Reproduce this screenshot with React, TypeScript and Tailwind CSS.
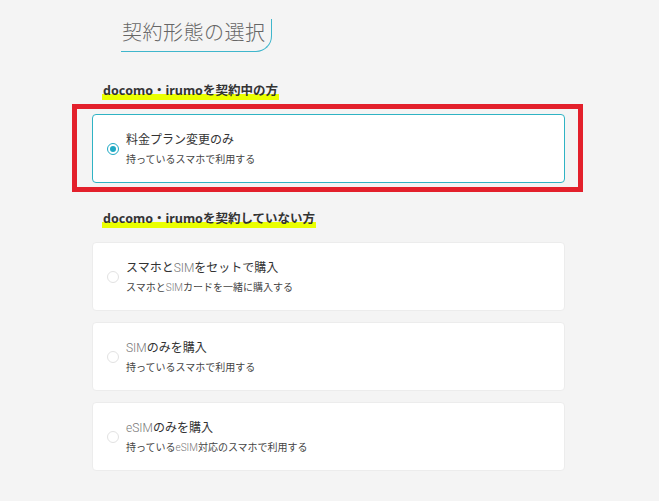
import React from 'react';

const jp = "font-['Noto_Sans','Noto_Sans_CJK_JP',sans-serif]";

type Plan = {
  title: React.ReactNode;
  sub: React.ReactNode;
  selected?: boolean;
};

const Latin = ({ children }: { children: React.ReactNode }) => (
  <span className="font-['Roboto','Noto_Sans_CJK_JP',sans-serif] font-light text-[#777]">{children}</span>
);

function Radio({ on }: { on?: boolean }) {
  if (on) {
    return (
      <span className="flex h-[12px] w-[12px] shrink-0 items-center justify-center rounded-full border-[1.5px] border-[#1fa9c4] bg-white">
        <span className="h-[6px] w-[6px] rounded-full bg-[#1fa9c4]" />
      </span>
    );
  }
  return <span className="h-[12px] w-[12px] shrink-0 rounded-full border border-[#e2e2e2] bg-white" />;
}

function PlanCard({ plan, marked }: { plan: Plan; marked?: boolean }) {
  return (
    <div className="relative">
      {marked && (
        <div className="pointer-events-none absolute -bottom-[9px] -left-[20px] -right-[18px] -top-[10px] border-[5px] border-[#e3202b]" />
      )}
      <div
        className={`flex h-[69px] items-center gap-[7px] rounded-[4px] bg-white pl-[14px] ${
          plan.selected ? 'border border-[#2fb3c4]' : 'border border-[#ececec]'
        }`}
      >
        <Radio on={plan.selected} />
        <div className="flex flex-col pt-[1px]">
          <p className="text-[12px] leading-[16px] font-normal text-[#333]">{plan.title}</p>
          <p className="mt-[4px] text-[10px] leading-[14px] text-[#444]">{plan.sub}</p>
        </div>
      </div>
    </div>
  );
}

function SectionHeading({ children }: { children: React.ReactNode }) {
  return (
    <div className="flex pl-[10px]">
      <span className="bg-[linear-gradient(transparent_66%,#eaff00_66%)] px-[1px] text-[12.5px] leading-[18px] font-bold text-[#333]">
        {children}
      </span>
    </div>
  );
}

export default function App() {
  const others: Plan[] = [
    {
      title: <>スマホと<Latin>SIM</Latin>をセットで購入</>,
      sub: <>スマホと<Latin>SIM</Latin>カードを一緒に購入する</>,
    },
    {
      title: <><Latin>SIM</Latin>のみを購入</>,
      sub: <>持っているスマホで利用する</>,
    },
    {
      title: <><Latin>eSIM</Latin>のみを購入</>,
      sub: <>持っている<Latin>eSIM</Latin>対応のスマホで利用する</>,
    },
  ];

  return (
    <div className={`min-h-screen bg-[#f4f4f4] ${jp}`}>
      <div className="ml-[92px] flex w-[473px] flex-col pt-[19px]">
        {/* Title */}
        <div className="ml-[29px] h-[33px] w-[151px] rounded-br-[16px] border-r border-b border-[#3fb6cc] pl-[1px] text-[20px] leading-[28px] font-light tracking-[0.5px] text-[#666]">
          契約形態の選択
        </div>

        <div className="mt-[30px]">
          <SectionHeading>docomo・irumoを契約中の方</SectionHeading>
        </div>
        <div className="mt-[14px]">
          <PlanCard
            marked
            plan={{ title: '料金プラン変更のみ', sub: '持っているスマホで利用する', selected: true }}
          />
        </div>

        <div className="mt-[27px]">
          <SectionHeading>docomo・irumoを契約していない方</SectionHeading>
        </div>
        <div className="mt-[14px] flex flex-col gap-[11px]">
          {others.map((p, i) => (
            <PlanCard key={i} plan={p} />
          ))}
        </div>
      </div>
    </div>
  );
}
